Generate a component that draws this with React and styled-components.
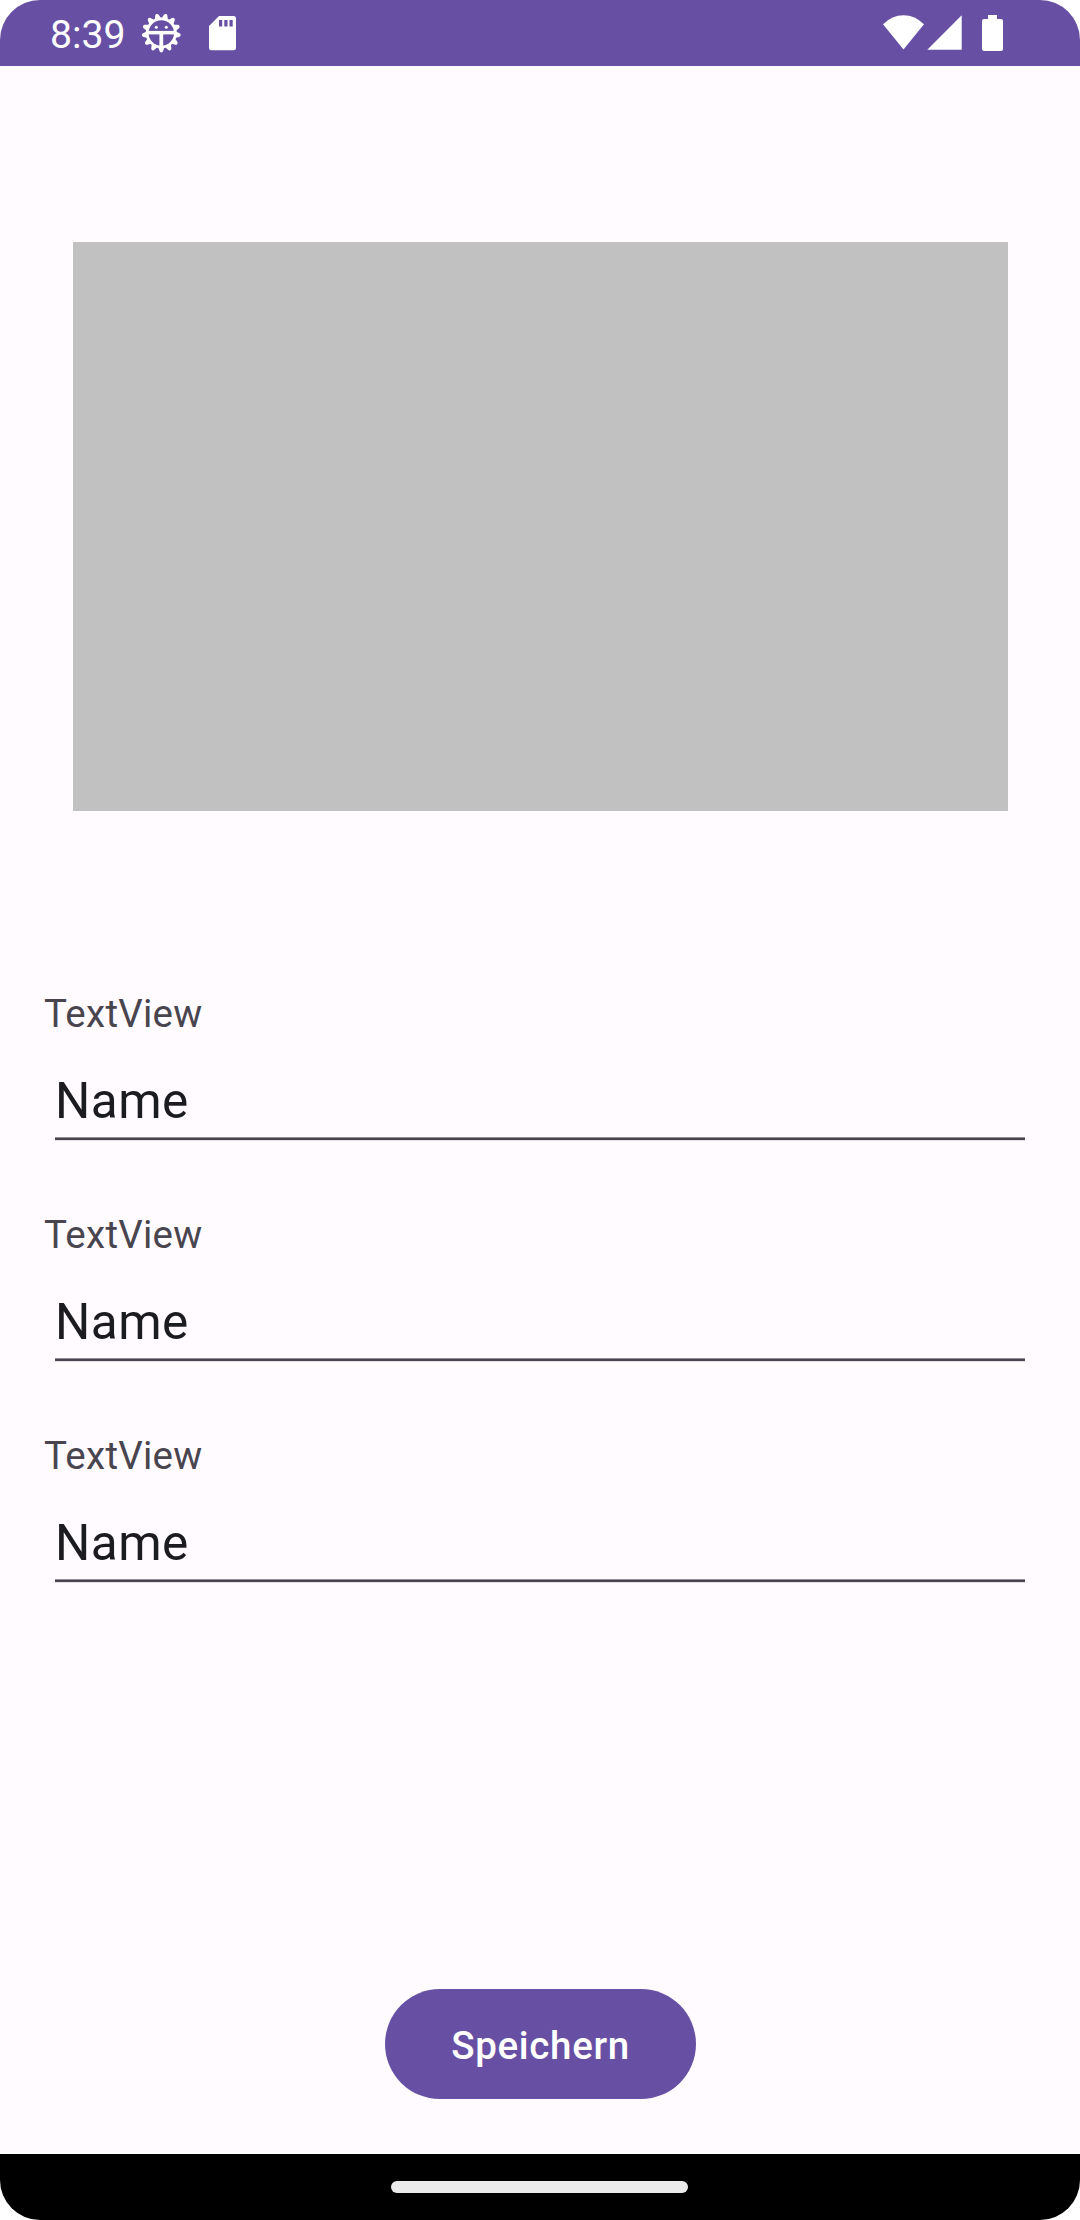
import React from "react";
import styled, { createGlobalStyle } from "styled-components";

const GlobalStyle = createGlobalStyle`
  * { box-sizing: border-box; }
  body { margin: 0; background: #fff; }
`;

const Screen = styled.div`
  width: 1080px;
  height: 2220px;
  display: flex;
  flex-direction: column;
  overflow: hidden;
  border-radius: 40px;
  background: #fffbff;
  font-family: Roboto, "Liberation Sans", sans-serif;
`;

const StatusBar = styled.header`
  flex: none;
  height: 66px;
  padding: 0 76px 0 50px;
  display: flex;
  justify-content: space-between;
  background: #6750a4;
  color: #fff;
`;

const StatusGroup = styled.div`
  display: flex;
  align-items: flex-start;
`;

const Clock = styled.span`
  width: 91px;
  padding-top: 13px;
  font-size: 39.2px;
  line-height: 45px;
`;

const Icon = styled.svg`
  display: block;
  flex: none;
  margin-left: ${(p) => p.$gap || 0}px;
`;

const Content = styled.main`
  flex: 1;
  display: flex;
  flex-direction: column;
  padding: 176px 0 55px;
`;

const ImagePlaceholder = styled.div`
  width: 935px;
  height: 569px;
  margin-left: 73px;
  background: #c1c1c1;
`;

const Form = styled.div`
  display: flex;
  flex-direction: column;
  gap: 66px;
  margin-top: 180px;
  padding: 0 44px;
`;

const Field = styled.label`
  display: block;
  height: 155px;
`;

const Label = styled.span`
  display: block;
  height: 51px;
  font-size: 38.5px;
  line-height: 45px;
  letter-spacing: 0.25px;
  color: #49454f;
`;

const Input = styled.input`
  display: block;
  width: 970px;
  height: 99px;
  margin: 0 0 0 11px;
  padding: 19px 0 0;
  border: 0;
  outline: 0;
  background: linear-gradient(
      to bottom,
      #918d96 0 1px,
      #49454f 1px 3px,
      #e3dfe4 3px 4px
    )
    left bottom / 100% 4px no-repeat;
  font: 400 49.5px/58px Roboto, "Liberation Sans", sans-serif;
  letter-spacing: 0.45px;
  color: #1c1b1f;
`;

const SaveButton = styled.button`
  width: 311px;
  height: 110px;
  margin: auto 0 0 385px;
  padding: 3px 0 0;
  border: 0;
  border-radius: 55px;
  background: #6750a4;
  color: #fff;
  font: 500 38.5px/45px Roboto, "Liberation Sans", sans-serif;
  letter-spacing: 0.69px;
`;

const NavigationBar = styled.footer`
  flex: none;
  height: 66px;
  padding-top: 27px;
  background: #000;
`;

const HomeHandle = styled.div`
  width: 297px;
  height: 12px;
  margin-left: 391px;
  border-radius: 6px;
  background: #ebebeb;
`;

const TOOTH_COUNT = 13;
const TEETH = Array.from({ length: TOOTH_COUNT }, (_, i) => (i * 360) / TOOTH_COUNT);

function DebugIcon() {
  return (
    <Icon width="40" height="66" viewBox="141 0 40 66">
      <circle cx="161.3" cy="32.9" r="14.1" fill="none" stroke="#fff" strokeWidth="2.8" />
      <g fill="#fff">
        {TEETH.map((angle) => (
          <path
            key={angle}
            d="M157.900 46.700h6.800l-1.600 4.400a1.900 1.900 0 0 1-3.600 0z"
            transform={`rotate(${angle} 161.3 32.9)`}
          />
        ))}
        <path d="M147.500 30.900h27.600v3.500h-27.600z" />
        <path d="M159.400 34h3.800v14h-3.800z" />
        <circle cx="156.300" cy="27.300" r="1.500" />
        <circle cx="166.300" cy="27.300" r="1.500" />
      </g>
    </Icon>
  );
}

function StorageIcon() {
  return (
    <Icon width="27" height="66" viewBox="209 0 27 66" $gap={28}>
      <path
        fill="#fff"
        fillRule="evenodd"
        d="M219 16h14.500a2.500 2.500 0 0 1 2.500 2.500v29.300a2.500 2.500 0 0 1-2.500 2.500h-22a2.500 2.500 0 0 1-2.500-2.500V26zM219 20v6.400h3.200v-6.400zM224.300 20v6.400h3.200v-6.400zM229.500 20v6.400h3.200v-6.400z"
      />
    </Icon>
  );
}

function WifiIcon() {
  return (
    <Icon width="42" height="66" viewBox="883 0 42 66">
      <path fill="#fff" d="M883 24.300Q892 15.200 903.500 15.200T924 24.300L903.500 49.500z" />
    </Icon>
  );
}

function SignalIcon() {
  return (
    <Icon width="36" height="66" viewBox="926 0 36 66" $gap={1}>
      <path fill="#fff" d="M961.700 15.300v34.400H927.300z" />
    </Icon>
  );
}

function BatteryIcon() {
  return (
    <Icon width="22" height="66" viewBox="982 0 22 66" $gap={20}>
      <path
        fill="#fff"
        d="M988 15h9v4h4a2 2 0 0 1 2 2v28a2 2 0 0 1-2 2h-17a2 2 0 0 1-2-2V21a2 2 0 0 1 2-2h4z"
      />
    </Icon>
  );
}

const FIELDS = ["first", "second", "third"];

export default function App() {
  return (
    <>
      <GlobalStyle />
      <Screen>
        <StatusBar>
          <StatusGroup>
            <Clock>8:39</Clock>
            <DebugIcon />
            <StorageIcon />
          </StatusGroup>
          <StatusGroup>
            <WifiIcon />
            <SignalIcon />
            <BatteryIcon />
          </StatusGroup>
        </StatusBar>
        <Content>
          <ImagePlaceholder />
          <Form>
            {FIELDS.map((id) => (
              <Field key={id}>
                <Label>TextView</Label>
                <Input defaultValue="Name" />
              </Field>
            ))}
          </Form>
          <SaveButton type="button">Speichern</SaveButton>
        </Content>
        <NavigationBar>
          <HomeHandle />
        </NavigationBar>
      </Screen>
    </>
  );
}
